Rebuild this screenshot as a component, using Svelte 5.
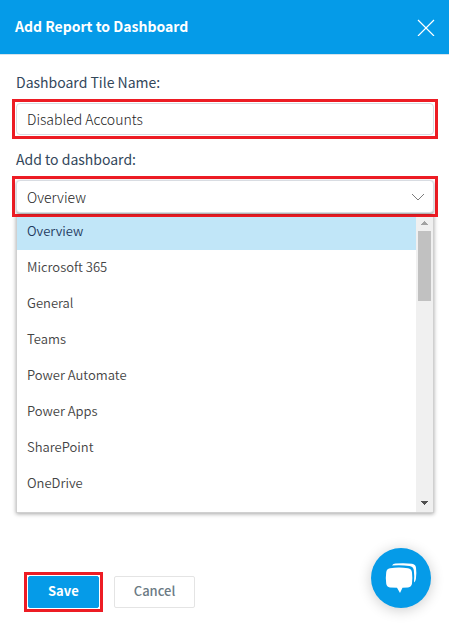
<script>
    let tileName = $state('Disabled Accounts');
    let selected = $state('Overview');

    const dashboards = [
        'Overview',
        'Microsoft 365',
        'General',
        'Teams',
        'Power Automate',
        'Power Apps',
        'SharePoint',
        'OneDrive'
    ];
</script>


<div class="panel">
    <header class="panel__header">
        <h1 class="panel__title">Add Report to Dashboard</h1>
        <button class="panel__close" type="button" aria-label="Close">
            <svg width="18" height="18" viewBox="0 0 18 18" fill="none" stroke="#fff" stroke-width="1.2">
                <path d="M1 2L17 18M17 2L1 18"/>
            </svg>
        </button>
    </header>

    <form class="form" onsubmit={(e) => e.preventDefault()}>
        <label class="form__label" for="tile-name">Dashboard Tile Name:</label>
        <div class="highlight">
            <input class="form__control" id="tile-name" type="text" bind:value={tileName}/>
        </div>

        <label class="form__label form__label--next" for="dashboard">Add to dashboard:</label>
        <div class="highlight highlight--open">
            <select class="form__control form__control--select" id="dashboard" bind:value={selected}>
                {#each dashboards as dashboard}
                <option value={dashboard}>{dashboard}</option>
                {/each}
            </select>
            <svg class="form__chevron" width="14" height="8" viewBox="0 0 14 8" fill="none" stroke="#7c7c7c">
                <path d="M1 1L7 7L13 1"/>
            </svg>
        </div>

        <div class="menu">
            <div class="menu__list" role="listbox" aria-label="Dashboards">
                {#each dashboards as dashboard}
                <button
                    class="menu__item"
                    class:menu__item--active={dashboard === selected}
                    type="button"
                    role="option"
                    aria-selected={dashboard === selected}
                    onclick={() => selected = dashboard}
                >{dashboard}</button>
                {/each}
            </div>
            <div class="scrollbar" aria-hidden="true">
                <svg width="7" height="4" viewBox="0 0 7 4" fill="#a3a3a3"><path d="M3 0H4V1H5V2H6V3H7V4H0V3H1V2H2V1H3Z"/></svg>
                <div class="scrollbar__thumb"></div>
                <svg class="scrollbar__down" width="7" height="4" viewBox="0 0 7 4" fill="#505050"><path d="M0 0H7V1H6V2H5V3H4V4H3V3H2V2H1V1H0Z"/></svg>
            </div>
        </div>

        <div class="actions">
            <div class="highlight">
                <button class="actions__button actions__button--save" type="submit">Save</button>
            </div>
            <button class="actions__button actions__button--cancel" type="button">Cancel</button>
        </div>
    </form>

    <button class="chat" type="button" aria-label="Open chat">
        <svg width="32" height="32" viewBox="0 0 32 32" fill="#fff">
            <path d="M5 6.300Q14 4.800 23 6.300Q26.500 6.800 27 10.500Q27.700 16 27 21.500Q26.500 25 23 25.400L17.500 25.800L15 31L12 25.800L5 25.400Q1.600 25 1.200 21.500Q.4 16 1.200 10.500Q1.600 6.800 5 6.300Z"/>
            <path d="M7 3.500Q8 1.800 10.500 1.600Q19 .7 27 1.800Q30.500 2.200 31 5.700Q31.800 11.500 30.900 17Q30.500 19.500 29 20.500Q29.600 14 28.800 8Q28.200 4.500 24.500 4Q16 2.700 7 3.500Z"/>
        </svg>
    </button>
</div>


<style>
    :global(body) {
        margin: 0;
        background-color: #fff;
    }

    .panel,
    .panel button,
    .panel input,
    .panel select {
        box-sizing: border-box;
        font-family: "Noto Sans CJK SC", "Noto Sans", sans-serif;
    }

    .panel {
        position: relative;
        min-height: 100vh;
    }

    .panel__header {
        display: flex;
        align-items: center;
        justify-content: space-between;

        height: 54px;
        padding: 0 14px 0 15px;

        background-color: #059be8;
        border-bottom: 1px solid #d5e3ec;
    }

    .panel__title {
        margin: 0;
        padding-bottom: 2px;

        font-size: 14px;
        line-height: 24px;
        font-weight: 700;
        color: #fff;
    }

    .panel__close {
        display: flex;
        padding: 0;

        background: none;
        border: none;
        cursor: pointer;
    }

    .form {
        padding: 15px 11px 0 12px;
    }

    .form__label {
        display: block;
        margin: 0 4px 5px;

        font-size: 14px;
        line-height: 24px;
        color: #33475b;
    }

    .form__label--next {
        margin-top: 8px;
    }

    .highlight {
        padding: 1px;
        border: 3px solid #ed1c24;
    }

    .highlight--open {
        position: relative;
        z-index: 1;
    }

    .form__control {
        display: block;
        width: 100%;
        height: 32px;
        padding: 0 10px;

        font-size: 14px;
        line-height: 20px;
        font-weight: 300;
        color: #222;

        background-color: #fff;
        border: 1px solid #d8dce2;
        border-radius: 4px;
        outline: none;
    }

    .form__control--select {
        height: 33px;

        appearance: none;
        box-shadow: 0 1px 3px rgba(0, 0, 0, 0.35);
    }

    .form__chevron {
        position: absolute;
        top: 50%;
        right: 10px;

        transform: translateY(-50%);
        pointer-events: none;
    }

    .menu {
        display: flex;
        margin: -3px 4px 0;

        background-color: #fff;
        border: 1px solid #d0d0d0;
        border-top: none;
        box-shadow: 0 1px 4px rgba(0, 0, 0, 0.35);
    }

    .menu__list {
        flex-grow: 1;
        padding-bottom: 10px;
    }

    .menu__item {
        display: block;
        width: 100%;
        height: 36px;
        padding: 0 10px 2px;

        font-size: 13px;
        line-height: 20px;
        font-weight: 350;
        text-align: left;
        color: #444;

        background: none;
        border: none;
        cursor: pointer;
    }

    .menu__item--active {
        color: #1f3a5f;
        background-color: #c1e6f8;
    }

    .scrollbar {
        display: flex;
        flex-direction: column;
        align-items: center;

        width: 17px;
        padding: 7px 0;
        box-sizing: border-box;

        background-color: #f0f0f0;
    }

    .scrollbar__thumb {
        width: 13px;
        height: 70px;
        margin-top: 6px;

        background-color: #c1c1c1;
    }

    .scrollbar__down {
        margin-top: auto;
    }

    .actions {
        display: flex;
        align-items: center;
        gap: 11px;

        margin: 59px 12px 0;
    }

    .actions__button {
        display: block;
        height: 32px;
        padding: 0 19px 2px;

        font-size: 13px;
        line-height: 20px;
        font-weight: 700;

        border-radius: 2px;
        cursor: pointer;
    }

    .actions__button--save {
        color: #fff;
        background-color: #059be8;
        border: 1px solid #059be8;
    }

    .actions__button--cancel {
        font-weight: 500;
        color: #6b7a84;
        background-color: #fff;
        border: 1px solid #e4e4e4;
    }

    .chat {
        position: absolute;
        right: 18px;
        bottom: 20px;

        display: flex;
        align-items: center;
        justify-content: center;

        width: 60px;
        height: 60px;
        padding: 0;

        background-color: #059be8;
        border: none;
        border-radius: 50%;
        box-shadow: 0 2px 14px rgba(0, 0, 0, 0.2);
        cursor: pointer;
    }
</style>
